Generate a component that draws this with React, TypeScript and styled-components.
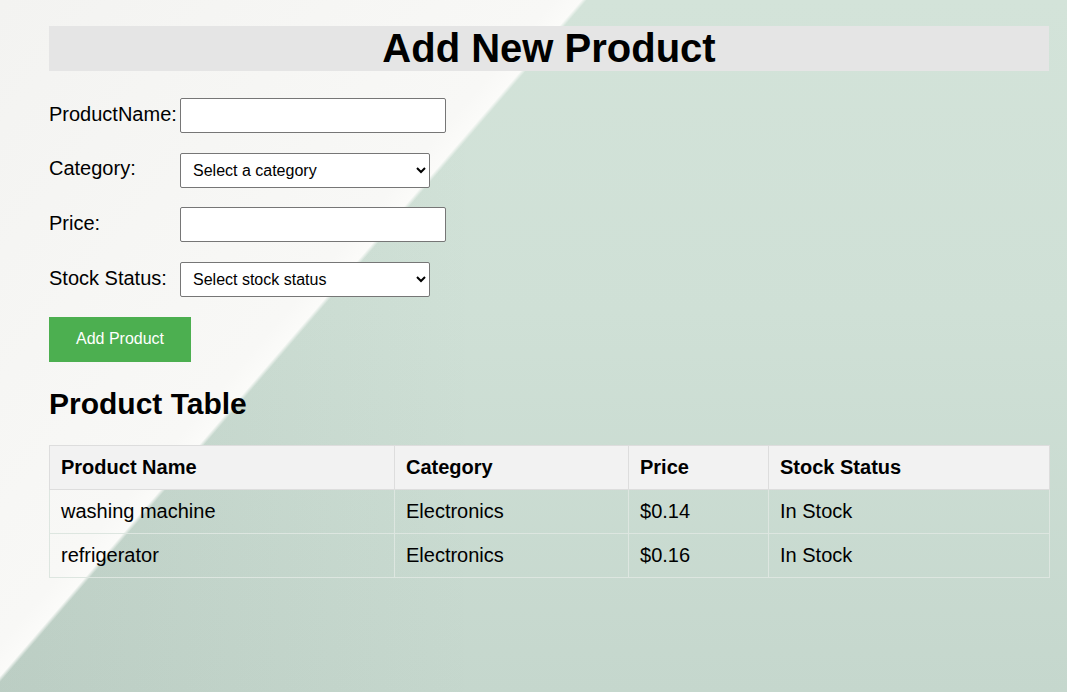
import React, { useState } from "react";
import styled, { createGlobalStyle } from "styled-components";

const GlobalStyle = createGlobalStyle`
  html, body {
    margin: 0;
    padding: 0;
  }
  body {
    font-family: "Liberation Sans", Arial, sans-serif;
    color: #000;
  }
  * {
    box-sizing: border-box;
  }
`;

const Page = styled.div`
  min-height: 100vh;
  padding: 26px 18px 40px 49px;
  background:
    linear-gradient(130.7deg, #f3f3f1 0, #f8f8f6 420px, #fbfbf9 441px, transparent 445px),
    linear-gradient(to right, rgba(60, 80, 70, 0.07), rgba(60, 80, 70, 0) 45%),
    linear-gradient(to bottom, #d3e3d9 0%, #cfe0d6 45%, #c5d7cd 100%);
`;

const Container = styled.div`
  width: 1000px;
`;

const TitleBar = styled.h1`
  margin: 0 0 27px;
  background: #e5e5e5;
  font-size: 40px;
  line-height: 45px;
  font-weight: bold;
  text-align: center;
`;

const Form = styled.form`
  display: flex;
  flex-direction: column;
  align-items: flex-start;
  gap: 19.7px;
`;

const Row = styled.div`
  display: flex;
  align-items: center;
`;

const Label = styled.label`
  width: 131px;
  font-size: 20px;
  line-height: 23px;
  margin-top: -3px;
`;

const TextInput = styled.input`
  width: 266px;
  height: 35px;
  border: 1px solid #767676;
  border-radius: 2px;
  background: #fff;
  padding: 0 8px;
  font-size: 16px;
  font-family: "Liberation Sans", Arial, sans-serif;
`;

const Select = styled.select`
  width: 250px;
  height: 35px;
  border: 1px solid #767676;
  border-radius: 2px;
  background: #fff;
  padding: 0 8px;
  font-size: 16px;
  font-family: "Liberation Sans", Arial, sans-serif;
  color: #000;
`;

const SubmitButton = styled.button`
  height: 45px;
  padding: 0 27px;
  border: none;
  background: #4caf50;
  color: #fff;
  font-size: 16px;
  font-family: "Liberation Sans", Arial, sans-serif;
  cursor: pointer;
`;

const SectionTitle = styled.h2`
  margin: 24px 0 24px;
  font-size: 30px;
  line-height: 35px;
  font-weight: bold;
`;

const Table = styled.table`
  width: 1000px;
  border-collapse: collapse;
  table-layout: fixed;
  font-size: 20px;
`;

const HeadCell = styled.th`
  background: #f2f2f2;
  border: 1px solid #ddd;
  padding: 10px 11px;
  line-height: 23px;
  text-align: left;
  font-weight: bold;
`;

const Cell = styled.td`
  border: 1px solid #dde6e0;
  padding: 10px 11px;
  line-height: 23px;
`;

type Product = {
  name: string;
  category: string;
  price: number;
  stock: string;
};

const initialProducts: Product[] = [
  { name: "washing machine", category: "Electronics", price: 0.14, stock: "In Stock" },
  { name: "refrigerator", category: "Electronics", price: 0.16, stock: "In Stock" },
];

export default function App() {
  const [products, setProducts] = useState<Product[]>(initialProducts);
  const [name, setName] = useState("");
  const [category, setCategory] = useState("");
  const [price, setPrice] = useState("");
  const [stock, setStock] = useState("");

  const handleSubmit = (e: React.FormEvent) => {
    e.preventDefault();
    if (!name || !category || !price || !stock) return;
    setProducts((prev) => [
      ...prev,
      { name, category, price: parseFloat(price) || 0, stock },
    ]);
    setName("");
    setCategory("");
    setPrice("");
    setStock("");
  };

  return (
    <>
      <GlobalStyle />
      <Page>
        <Container>
          <TitleBar>Add New Product</TitleBar>
          <Form onSubmit={handleSubmit}>
            <Row>
              <Label htmlFor="name">ProductName:</Label>
              <TextInput id="name" value={name} onChange={(e) => setName(e.target.value)} />
            </Row>
            <Row>
              <Label htmlFor="category">Category:</Label>
              <Select id="category" value={category} onChange={(e) => setCategory(e.target.value)}>
                <option value="">Select a category</option>
                <option value="Electronics">Electronics</option>
                <option value="Furniture">Furniture</option>
                <option value="Clothing">Clothing</option>
              </Select>
            </Row>
            <Row>
              <Label htmlFor="price">Price:</Label>
              <TextInput id="price" value={price} onChange={(e) => setPrice(e.target.value)} />
            </Row>
            <Row>
              <Label htmlFor="stock">Stock Status:</Label>
              <Select id="stock" value={stock} onChange={(e) => setStock(e.target.value)}>
                <option value="">Select stock status</option>
                <option value="In Stock">In Stock</option>
                <option value="Out of Stock">Out of Stock</option>
              </Select>
            </Row>
            <SubmitButton type="submit">Add Product</SubmitButton>
          </Form>

          <SectionTitle>Product Table</SectionTitle>
          <Table>
            <colgroup>
              <col style={{ width: 345 }} />
              <col style={{ width: 234 }} />
              <col style={{ width: 140 }} />
              <col style={{ width: 281 }} />
            </colgroup>
            <thead>
              <tr>
                <HeadCell>Product Name</HeadCell>
                <HeadCell>Category</HeadCell>
                <HeadCell>Price</HeadCell>
                <HeadCell>Stock Status</HeadCell>
              </tr>
            </thead>
            <tbody>
              {products.map((p, i) => (
                <tr key={i}>
                  <Cell>{p.name}</Cell>
                  <Cell>{p.category}</Cell>
                  <Cell>${p.price.toFixed(2)}</Cell>
                  <Cell>{p.stock}</Cell>
                </tr>
              ))}
            </tbody>
          </Table>
        </Container>
      </Page>
    </>
  );
}
